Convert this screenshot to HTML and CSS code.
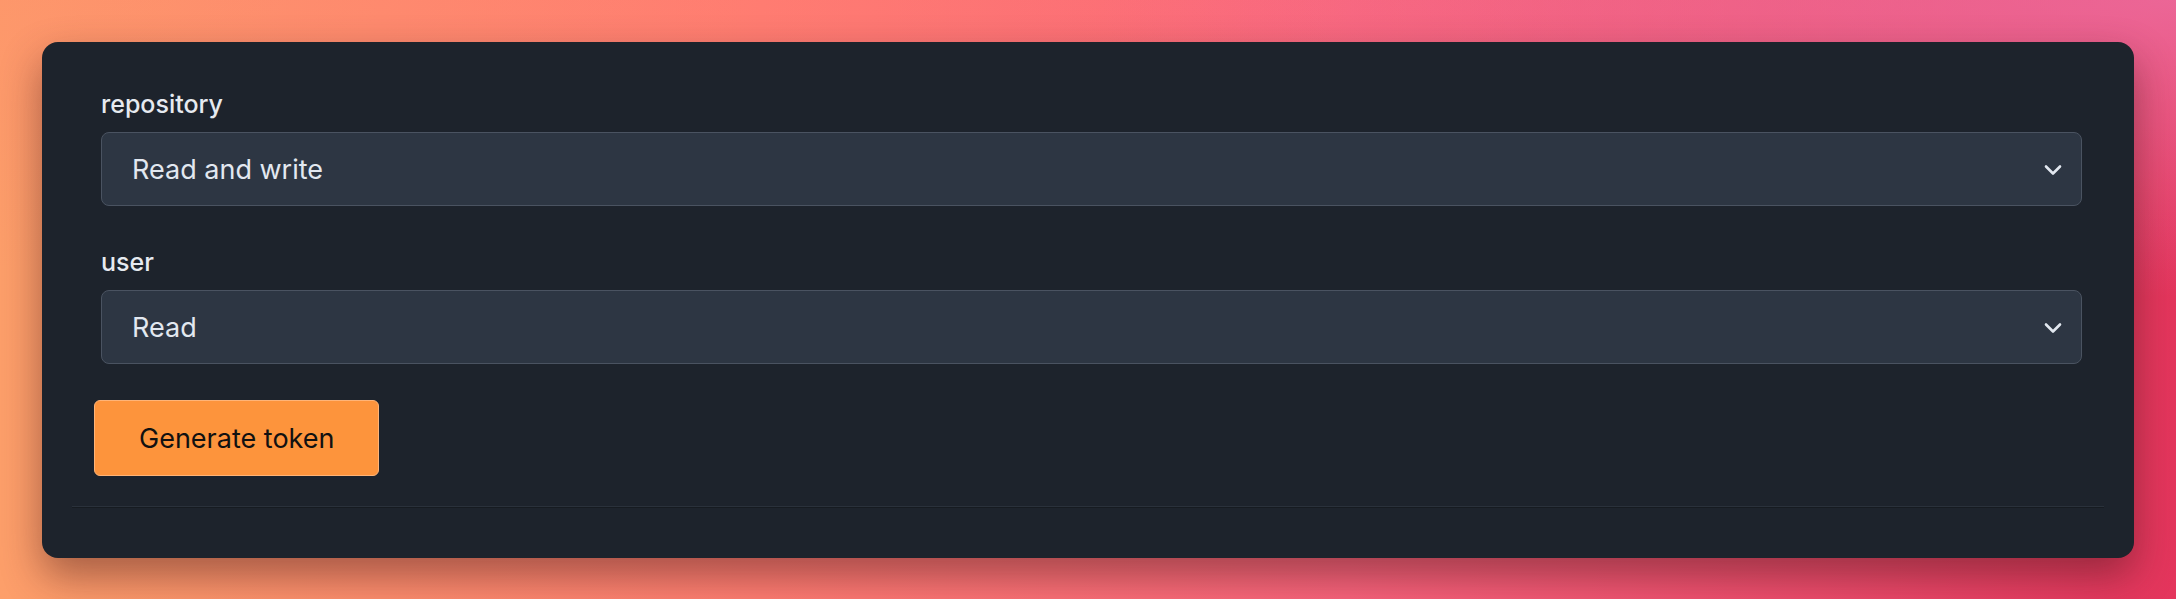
FILE: index.html
```html
<!DOCTYPE html>
<html lang="en">
<head>
    <meta charset="UTF-8">
    <meta name="viewport" content="width=device-width, initial-scale=1.0">
    <title>Generate token</title>
    <link rel="stylesheet" href="styles.css">
</head>
<body>
    <div class="card">
        <form class="token-form">
            <div class="field">
                <label for="repository">repository</label>
                <div class="select-wrap">
                    <select id="repository">
                        <option>Read and write</option>
                        <option>Read</option>
                        <option>None</option>
                    </select>
                    <svg class="chevron" width="18" height="12" viewBox="0 0 18 12">
                        <path d="M2 2.5 L9 9.5 L16 2.5" fill="none" stroke="#e2e8f0" stroke-width="2.6" stroke-linecap="round" stroke-linejoin="round"/>
                    </svg>
                </div>
            </div>
            <div class="field">
                <label for="user">user</label>
                <div class="select-wrap">
                    <select id="user">
                        <option>Read</option>
                        <option>Read and write</option>
                        <option>None</option>
                    </select>
                    <svg class="chevron" width="18" height="12" viewBox="0 0 18 12">
                        <path d="M2 2.5 L9 9.5 L16 2.5" fill="none" stroke="#e2e8f0" stroke-width="2.6" stroke-linecap="round" stroke-linejoin="round"/>
                    </svg>
                </div>
            </div>
            <button type="button" class="button">Generate token</button>
        </form>
        <hr class="divider">
    </div>
</body>
</html>
```

FILE: styles.css
```css
   body {
       font-family: Inter, "Noto Sans", sans-serif;
       margin: 0;
       padding: 42px;
       min-height: 599px;
       box-sizing: border-box;
       background:
           radial-gradient(ellipse at 100% 0%, rgba(236, 108, 160, 0.85) 0%, rgba(236, 108, 160, 0) 35%),
           linear-gradient(180deg, rgba(255, 120, 110, 0.2) 0%, rgba(255, 120, 110, 0) 45%),
           linear-gradient(90deg, #fd9f6a 0%, #ff7d72 35%, #f9637c 62%, #ec4a6b 85%, #e4355c 100%);
   }
   .card {
       background-color: #1d232c;
       border-radius: 16px;
       padding: 47px 30px 50px;
       box-shadow: 0 18px 40px rgba(60, 20, 20, 0.45);
   }
   .token-form {
       padding: 0 22px;
   }
   .field {
       margin-left: 7px;
       margin-bottom: 41px;
   }
   .field:last-of-type {
       margin-bottom: 36px;
   }
   .field label {
       display: block;
       font-size: 25px;
       font-weight: 500;
       line-height: 31px;
       color: #e6eaf0;
       margin-bottom: 12px;
   }
   .select-wrap {
       position: relative;
   }
   .select-wrap select {
       appearance: none;
       -webkit-appearance: none;
       width: 100%;
       height: 74px;
       box-sizing: border-box;
       background-color: #2d3643;
       border: 1px solid #4a5361;
       border-radius: 8px;
       color: #e2e8f0;
       font-family: inherit;
       font-size: 27px;
       padding: 0 60px 0 30px;
       outline: none;
   }
   .chevron {
       position: absolute;
       right: 20px;
       top: 32px;
       pointer-events: none;
   }
   .button {
       display: block;
       height: 76px;
       padding: 0 44px;
       background-color: #fd943c;
       border: 1px solid #ffb477;
       border-radius: 6px;
       color: #111111;
       font-family: inherit;
       font-size: 27px;
       cursor: pointer;
   }
   .button:hover {
       background-color: #ff9f4e;
   }
   /* linha de separação */
   .divider {
       margin: 30px 0 0;
       border: none;
       border-top: 1px solid #2a313b;
       border-bottom: 1px solid #161b21;
   }
```
